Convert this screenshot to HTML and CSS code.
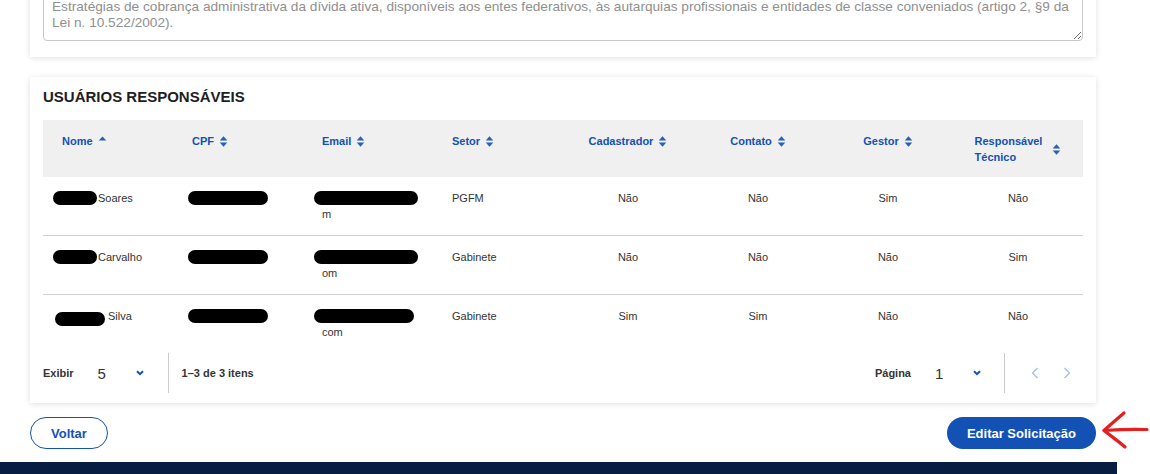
FILE: index.html
```html
<!DOCTYPE html>
<html lang="pt-BR">

<head>
    <meta charset="UTF-8">
    <meta name="viewport" content="width=device-width, initial-scale=1.0">
    <title>Solicitação de adesão</title>
    <link rel="stylesheet" href="styles.css">
</head>

<body>
    <div class="page">
        <main class="content">
            <section class="card card-description">
                <textarea class="description" rows="2" readonly>Estratégias de cobrança administrativa da dívida ativa, disponíveis aos entes federativos, às autarquias profissionais e entidades de classe conveniados (artigo 2, §9 da Lei n. 10.522/2002).</textarea>
            </section>

            <section class="card card-users">
                <h2 class="card-title">Usuários responsáveis</h2>

                <table class="users">
                    <thead>
                        <tr>
                            <th><span class="sort-head">Nome
                                <svg class="sort-icon" viewBox="0 0 10 14"><path d="M0.8 6 L5 1.4 L9.2 6 Z" /></svg></span></th>
                            <th><span class="sort-head">CPF
                                <svg class="sort-icon" viewBox="0 0 10 14"><path d="M0.8 6 L5 1.2 L9.2 6 Z M0.8 8 L5 12.8 L9.2 8 Z" /></svg></span></th>
                            <th><span class="sort-head">Email
                                <svg class="sort-icon" viewBox="0 0 10 14"><path d="M0.8 6 L5 1.2 L9.2 6 Z M0.8 8 L5 12.8 L9.2 8 Z" /></svg></span></th>
                            <th><span class="sort-head">Setor
                                <svg class="sort-icon" viewBox="0 0 10 14"><path d="M0.8 6 L5 1.2 L9.2 6 Z M0.8 8 L5 12.8 L9.2 8 Z" /></svg></span></th>
                            <th class="center"><span class="sort-head">Cadastrador
                                <svg class="sort-icon" viewBox="0 0 10 14"><path d="M0.8 6 L5 1.2 L9.2 6 Z M0.8 8 L5 12.8 L9.2 8 Z" /></svg></span></th>
                            <th class="center"><span class="sort-head">Contato
                                <svg class="sort-icon" viewBox="0 0 10 14"><path d="M0.8 6 L5 1.2 L9.2 6 Z M0.8 8 L5 12.8 L9.2 8 Z" /></svg></span></th>
                            <th class="center"><span class="sort-head">Gestor
                                <svg class="sort-icon" viewBox="0 0 10 14"><path d="M0.8 6 L5 1.2 L9.2 6 Z M0.8 8 L5 12.8 L9.2 8 Z" /></svg></span></th>
                            <th class="center"><span class="sort-head sort-head-wide"><span>Responsável<br>Técnico</span>
                                <svg class="sort-icon" viewBox="0 0 10 14"><path d="M0.8 6 L5 1.2 L9.2 6 Z M0.8 8 L5 12.8 L9.2 8 Z" /></svg></span></th>
                        </tr>
                    </thead>
                    <tbody>
                        <tr>
                            <td><span class="hidden-data name-mask"></span>Soares</td>
                            <td><span class="hidden-data cpf-mask"></span></td>
                            <td><span class="hidden-data mail-mask"></span><span class="mail-end">m</span></td>
                            <td>PGFM</td>
                            <td class="center">Não</td>
                            <td class="center">Não</td>
                            <td class="center">Sim</td>
                            <td class="center">Não</td>
                        </tr>
                        <tr>
                            <td><span class="hidden-data name-mask"></span>Carvalho</td>
                            <td><span class="hidden-data cpf-mask"></span></td>
                            <td><span class="hidden-data mail-mask"></span><span class="mail-end">om</span></td>
                            <td>Gabinete</td>
                            <td class="center">Não</td>
                            <td class="center">Não</td>
                            <td class="center">Não</td>
                            <td class="center">Sim</td>
                        </tr>
                        <tr>
                            <td><span class="hidden-data name-mask low"></span>Silva</td>
                            <td><span class="hidden-data cpf-mask"></span></td>
                            <td><span class="hidden-data mail-mask short"></span><span class="mail-end">com</span></td>
                            <td>Gabinete</td>
                            <td class="center">Sim</td>
                            <td class="center">Sim</td>
                            <td class="center">Não</td>
                            <td class="center">Não</td>
                        </tr>
                    </tbody>
                </table>

                <div class="pagination">
                    <span class="pag-label">Exibir</span>
                    <div class="pag-select">
                        <span class="pag-value">5</span>
                        <svg class="chevron" viewBox="0 0 8 6"><polyline points="1,1.2 4,4.2 7,1.2" /></svg>
                    </div>
                    <span class="pag-divider"></span>
                    <span class="pag-label pag-count">1–3 de 3 itens</span>

                    <div class="pag-right">
                        <span class="pag-label">Página</span>
                        <div class="pag-select">
                            <span class="pag-value">1</span>
                            <svg class="chevron" viewBox="0 0 8 6"><polyline points="1,1.2 4,4.2 7,1.2" /></svg>
                        </div>
                        <span class="pag-divider"></span>
                        <button class="pag-arrow" type="button" disabled>
                            <svg viewBox="0 0 8 12"><polyline points="6.5,1 1.5,6 6.5,11" /></svg>
                        </button>
                        <button class="pag-arrow" type="button" disabled>
                            <svg viewBox="0 0 8 12"><polyline points="1.5,1 6.5,6 1.5,11" /></svg>
                        </button>
                    </div>
                </div>
            </section>

            <div class="actions">
                <button class="btn btn-secondary" type="button">Voltar</button>
                <button class="btn btn-primary" type="button">Editar Solicitação</button>
            </div>
        </main>

        <footer class="footer"></footer>
    </div>

    <!-- red marker pointing at the edit button -->
    <svg class="marker" viewBox="0 0 50 42">
        <path d="M4 20.5 C 18 19.5, 34 19, 47 19.5" />
        <path d="M24 3 C 17 9, 10 15, 4 20.5 C 11 26, 18 31, 25 37" />
    </svg>
</body>

</html>
```

FILE: styles.css
```css
body {
    position: relative;
    margin: 0;
    font-family: "Liberation Sans", Arial, sans-serif;
    color: #333;
    background-color: #fff;
    overflow: hidden;
}

.page {
    width: 1117px;
}

.content {
    padding: 0 21px 0 30px;
}

.card {
    background-color: #fff;
    box-shadow: 0 1px 6px rgba(0, 0, 0, 0.13);
}

/* the page is scrolled, the top of this card is out of view */
.card-description {
    margin-top: -25px;
    padding: 16px 13px;
}

.description {
    display: block;
    box-sizing: border-box;
    width: 100%;
    height: 50px;
    padding: 7px 8px 9px;
    border: 1px solid #c8c8c8;
    border-radius: 4px;
    font-family: "Liberation Sans", Arial, sans-serif;
    font-size: 13.65px;
    line-height: 16px;
    color: #8f8f8f;
    resize: vertical;
    overflow: hidden;
}

.card-users {
    margin-top: 20px;
    padding: 11px 13px 10px;
}

.card-title {
    margin: 0 0 14px;
    font-size: 15px;
    line-height: 18px;
    font-weight: 700;
    text-transform: uppercase;
    color: #1e1e1e;
}

.users {
    width: 100%;
    border-collapse: collapse;
    table-layout: fixed;
}

.users th {
    padding: 13px 19px 12px;
    background-color: #f0f0f0;
    font-size: 11px;
    line-height: 16px;
    font-weight: 700;
    color: #1351b4;
    text-align: left;
    vertical-align: top;
}

.users td {
    padding: 13px 19px;
    font-size: 11px;
    line-height: 16px;
    color: #333;
    text-align: left;
    vertical-align: top;
}

.users tbody tr + tr td {
    border-top: 1px solid #d2d2d2;
}

.users .center {
    text-align: center;
}

.sort-head {
    display: inline-flex;
    align-items: center;
    gap: 5px;
    text-align: left;
}

.sort-head-wide {
    gap: 10px;
}

.sort-icon {
    width: 9px;
    height: 13px;
    fill: #2a5fb8;
}

/* blacked-out personal data */
.hidden-data {
    display: inline-block;
    height: 14px;
    border-radius: 7px;
    background-color: #000;
    vertical-align: -3px;
}

.name-mask {
    width: 44px;
    margin-left: -9px;
    margin-right: 1px;
}

.name-mask.low {
    width: 50px;
    margin-left: -7px;
    margin-right: 3px;
    vertical-align: -6px;
}

.cpf-mask {
    width: 80px;
    margin-left: -4px;
}

.mail-mask {
    display: block;
    width: 104px;
    margin-left: -8px;
    margin-top: 1px;
}

.mail-mask.short {
    width: 100px;
}

.mail-end {
    display: block;
    margin-top: 1px;
    color: #333;
}

.pagination {
    display: flex;
    align-items: center;
    height: 40px;
}

.pag-label {
    font-size: 11px;
    font-weight: 700;
    color: #333;
}

.pag-select {
    display: flex;
    align-items: center;
    justify-content: space-between;
    width: 46px;
    padding: 0 7px;
    margin-left: 17px;
}

.pag-value {
    font-size: 15px;
    color: #333;
}

.chevron {
    width: 8px;
    height: 6px;
    fill: none;
    stroke: #1351b4;
    stroke-width: 2;
}

.pag-divider {
    align-self: stretch;
    width: 1px;
    margin: 0 13px 0 17px;
    background-color: #ccc;
}

.pag-right {
    display: flex;
    align-items: center;
    align-self: stretch;
    margin-left: auto;
}

.pag-right .pag-divider {
    margin: 0 14px 0 16px;
}

.pag-arrow {
    display: flex;
    align-items: center;
    justify-content: center;
    width: 32px;
    height: 32px;
    padding: 0;
    border: none;
    background: transparent;
}

.pag-arrow svg {
    width: 8px;
    height: 12px;
    fill: none;
    stroke: #a9bfe6;
    stroke-width: 1.4;
}

.actions {
    display: flex;
    justify-content: space-between;
    margin-top: 14px;
}

.btn {
    height: 32px;
    padding: 0 20px;
    border-radius: 16px;
    font-family: "Liberation Sans", Arial, sans-serif;
    font-size: 13px;
    font-weight: 700;
    cursor: pointer;
}

.btn-secondary {
    border: 1px solid #1351b4;
    background-color: #fff;
    color: #1351b4;
}

.btn-primary {
    border: none;
    background-color: #1351b4;
    color: #fff;
}

.footer {
    height: 60px;
    margin-top: 13px;
    background-color: #071d41;
}

.marker {
    position: absolute;
    left: 1100px;
    top: 410px;
    width: 50px;
    height: 42px;
    fill: none;
    stroke: #e3201f;
    stroke-width: 3.2;
    stroke-linecap: round;
    stroke-linejoin: round;
}
```
